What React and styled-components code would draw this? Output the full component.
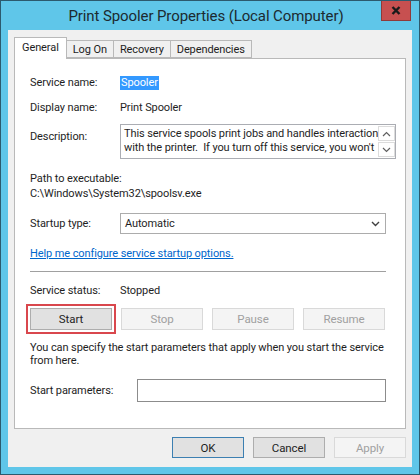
import React from 'react'
import styled, { createGlobalStyle } from 'styled-components'

const Global = createGlobalStyle`
  html, body { margin: 0; padding: 0; }
  body {
    width: 420px;
    height: 475px;
    overflow: hidden;
    font-family: Roboto, "Liberation Sans", sans-serif;
    font-size: 11px;
    letter-spacing: -0.1px;
    color: #1e1e1e;
  }
`

const Window = styled.div`
  box-sizing: border-box;
  width: 420px;
  height: 475px;
  border: 1px solid #2c5a6e;
  background: #5fc6e9;
  display: flex;
  flex-direction: column;
  padding: 0 7px 7px 7px;
`

const TitleBar = styled.div`
  height: 29px;
  display: grid;
  grid-template-columns: 1fr auto 1fr;
  align-items: start;
  margin: 0 -7px;
  padding-right: 8px;
`

const Title = styled.div`
  grid-column: 2;
  font-size: 15px;
  letter-spacing: -0.1px;
  line-height: 30px;
  color: #1c2a30;
  white-space: nowrap;
`

const Close = styled.div`
  grid-column: 3;
  justify-self: end;
  width: 30px;
  height: 20px;
  background: #c75050;
  border: 1px solid #8f3a3a;
  border-top: none;
  box-sizing: border-box;
  display: flex;
  align-items: center;
  justify-content: center;
`

const Client = styled.div`
  flex: 1;
  background: #f0f0f0;
  display: flex;
  flex-direction: column;
  padding: 7px 6px 9px 6px;
`

const Tabs = styled.div`
  display: flex;
  align-items: flex-end;
  height: 22px;
  position: relative;
  z-index: 1;
  margin-bottom: -1px;
`

const Tab = styled.div`
  box-sizing: border-box;
  height: ${p => (p.$active ? '22px' : '18px')};
  margin-bottom: ${p => (p.$active ? '0' : '1px')};
  padding: ${p => (p.$active ? '0 7px 3px' : '0 6px')};
  display: flex;
  align-items: center;
  background: ${p => (p.$active ? '#ffffff' : '#f0f0f0')};
  border: 1px solid #b9b9b9;
  border-bottom: ${p => (p.$active ? 'none' : '1px solid #b9b9b9')};
  margin-left: ${p => (p.$active ? '0' : '-1px')};
  color: #1e1e1e;
`

const Panel = styled.div`
  flex: 1;
  background: #ffffff;
  border: 1px solid #b9b9b9;
  padding: 0 19px 0 15px;
  display: flex;
  flex-direction: column;
`

const Row = styled.div`
  display: flex;
  align-items: ${p => p.$align || 'center'};
  margin-top: ${p => p.$mt}px;
  min-height: 15px;
`

const Label = styled.div`
  width: ${p => p.$w || 90}px;
  flex-shrink: 0;
  line-height: 15px;
  padding-top: ${p => p.$pt || 0}px;
`

const Text = styled.div`
  line-height: ${p => p.$lh || 15}px;
  margin-top: ${p => p.$mt || 0}px;
  white-space: nowrap;
`

const Selected = styled.span`
  background: #3399ff;
  color: #ffffff;
  padding: 0 1px;
  line-height: 14px;
  display: inline-block;
`

const DescBox = styled.div`
  flex: 1;
  height: 35px;
  box-sizing: border-box;
  border: 1px solid #abadb3;
  display: flex;
  background: #fff;
`

const DescText = styled.div`
  flex: 1;
  overflow: hidden;
  white-space: nowrap;
  line-height: 14px;
  padding: 2px 0 0 3px;
`

const ScrollCol = styled.div`
  width: 17px;
  display: flex;
  flex-direction: column;
  gap: 1px;
  padding: 1px 0;
`

const ScrollBtn = styled.div`
  flex: 1;
  border: 1px solid #dcdcdc;
  display: flex;
  align-items: center;
  justify-content: center;
`

const Select = styled.div`
  flex: 1;
  height: 21px;
  box-sizing: border-box;
  border: 1px solid #acacac;
  background: #fff;
  display: flex;
  align-items: center;
  justify-content: space-between;
  padding: 0 5px 0 4px;
`

const Link = styled.a`
  color: #0066cc;
  text-decoration: underline;
  line-height: 15px;
  margin-top: 12px;
  align-self: flex-start;
`

const Separator = styled.div`
  height: 1px;
  background: #a0a0a0;
  margin-top: 10px;
`

const ButtonRow = styled.div`
  display: flex;
  gap: ${p => p.$gap || 9}px;
  justify-content: ${p => p.$justify || 'flex-start'};
  margin-top: ${p => p.$mt || 0}px;
`

const Button = styled.div`
  box-sizing: border-box;
  width: ${p => p.$w || 82}px;
  height: ${p => p.$h || 22}px;
  display: flex;
  align-items: center;
  justify-content: center;
  font-size: 11.5px;
  background: ${p => (p.$disabled ? '#f4f4f4' : '#e1e1e1')};
  border: 1px solid ${p => (p.$default ? '#3c7fb1' : p.$disabled ? '#d9d9d9' : '#adadad')};
  color: ${p => (p.$disabled ? '#a0a0a0' : '#1e1e1e')};
  outline: ${p => (p.$marked ? '2px solid #d9474d' : 'none')};
  outline-offset: 2px;
`

const Input = styled.div`
  flex: 1;
  height: 23px;
  box-sizing: border-box;
  border: 1px solid #8c8c8c;
  background: #fff;
`

const Chevron = ({ up }) => (
  <svg width="9" height="6" viewBox="0 0 9 6">
    <path d={up ? 'M1 5 L4.5 1.5 L8 5' : 'M1 1 L4.5 4.5 L8 1'} fill="none" stroke="#606060" strokeWidth="1.2" />
  </svg>
)

export default function App() {
  return (
    <>
      <Global />
      <Window>
        <TitleBar>
          <Title>Print Spooler Properties (Local Computer)</Title>
          <Close>
            <svg width="10" height="9" viewBox="0 0 10 9">
              <path d="M1.5 1 L8.5 8 M8.5 1 L1.5 8" stroke="#1a1a1a" strokeWidth="2.4" />
            </svg>
          </Close>
        </TitleBar>
        <Client>
          <Tabs>
            <Tab $active>General</Tab>
            <Tab>Log On</Tab>
            <Tab>Recovery</Tab>
            <Tab>Dependencies</Tab>
          </Tabs>
          <Panel>
            <Row $mt={16}>
              <Label>Service name:</Label>
              <Selected>Spooler</Selected>
            </Row>
            <Row $mt={10}>
              <Label>Display name:</Label>
              <Text>Print Spooler</Text>
            </Row>
            <Row $mt={9} $align="flex-start">
              <Label $pt={5}>Description:</Label>
              <DescBox>
                <DescText>
                  This service spools print jobs and handles interaction<br />
                  with the printer.&nbsp; If you turn off this service, you won't
                </DescText>
                <ScrollCol>
                  <ScrollBtn><Chevron up /></ScrollBtn>
                  <ScrollBtn><Chevron /></ScrollBtn>
                </ScrollCol>
              </DescBox>
            </Row>
            <Text $mt={12}>Path to executable:</Text>
            <Text>C:\Windows\System32\spoolsv.exe</Text>
            <Row $mt={12}>
              <Label>Startup type:</Label>
              <Select>
                <span>Automatic</span>
                <svg width="9" height="6" viewBox="0 0 9 6">
                  <path d="M1 1 L4.5 4.5 L8 1" fill="none" stroke="#404040" strokeWidth="1.4" />
                </svg>
              </Select>
            </Row>
            <Link>Help me configure service startup options.</Link>
            <Separator />
            <Row $mt={11}>
              <Label>Service status:</Label>
              <Text>Stopped</Text>
            </Row>
            <ButtonRow $mt={10}>
              <Button $marked>Start</Button>
              <Button $disabled>Stop</Button>
              <Button $disabled>Pause</Button>
              <Button $disabled>Resume</Button>
            </ButtonRow>
            <Text $mt={11} $lh={13}>
              You can specify the start parameters that apply when you start the service<br />
              from here.
            </Text>
            <Row $mt={12}>
              <Label $w={107}>Start parameters:</Label>
              <Input />
            </Row>
          </Panel>
          <ButtonRow $mt={8} $justify="flex-end" $gap={9}>
            <Button $w={72} $h={21} $default>OK</Button>
            <Button $w={72} $h={21}>Cancel</Button>
            <Button $w={72} $h={21} $disabled>Apply</Button>
          </ButtonRow>
        </Client>
      </Window>
    </>
  )
}
